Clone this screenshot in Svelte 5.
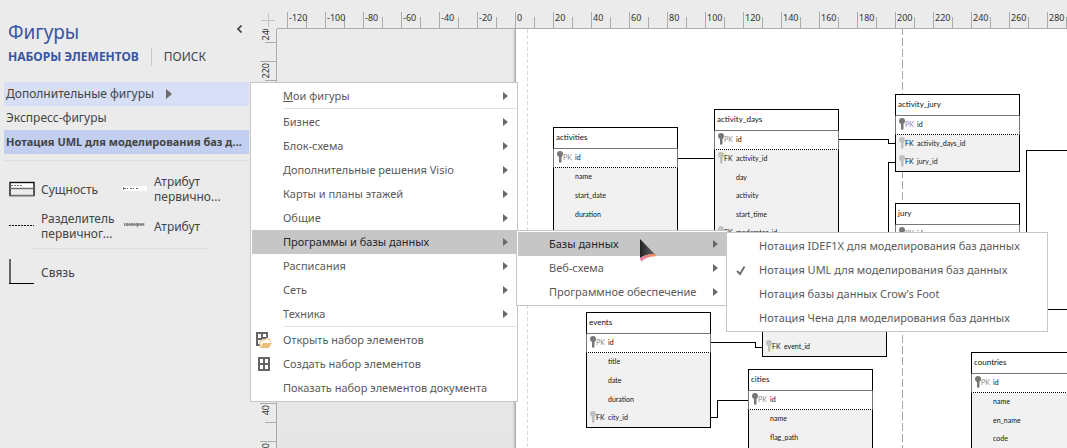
<script>
  const horizontalMarks = [-120, -100, -80, -60, -40, -20, 0, 20, 40, 60, 80, 100, 120, 140, 160, 180, 200, 220, 240, 260, 280];
  const verticalMarks = [240, 220, 200, 180, 160, 140, 120, 100, 80, 60, 40, 20];

  const categories = ['Бизнес', 'Блок-схема', 'Дополнительные решения Visio', 'Карты и планы этажей', 'Общие', 'Программы и базы данных', 'Расписания', 'Сеть', 'Техника'];
  const software = ['Базы данных', 'Веб-схема', 'Программное обеспечение'];
  const notations = [
    'Нотация IDEF1X для моделирования баз данных',
    'Нотация UML для моделирования баз данных',
    'Нотация базы данных Crow’s Foot',
    'Нотация Чена для моделирования баз данных'
  ];
  const openCategory = 'Программы и базы данных';
  const openSoftware = 'Базы данных';
  const checkedNotation = notations[1];

  const pk = { key: 'PK', name: 'id' };
  const field = (name) => ({ key: '', name });
  const fk = (name) => ({ key: 'FK', name });

  const entities = [
    { title: 'activities', x: 37, y: 98, h: 116, rows: [pk, field('name'), field('start_date'), field('duration'), field('')] },
    { title: 'activity_days', x: 198, y: 80, h: 134, rows: [pk, fk('activity_id'), field('day'), field('activity'), field('start_time'), fk('moderator_id')] },
    { title: 'activity_jury', x: 379, y: 65, h: 78, rows: [pk, fk('activity_days_id'), fk('jury_id')] },
    { title: 'jury', x: 379, y: 174, h: 41, rows: [pk] },
    { title: '', x: 246, y: 268, h: 60, rows: [field(''), fk('event_id')] },
    { title: 'events', x: 70, y: 283, h: 116, rows: [pk, field('title'), field('date'), field('duration'), fk('city_id')] },
    { title: 'cities', x: 232, y: 340, h: 97, rows: [pk, field('name'), field('flag_path'), field('')] },
    { title: 'countries', x: 455, y: 323, h: 97, rows: [pk, field('name'), field('en_name'), field('code')] }
  ];

  const connectors = [
    'M161 129.5H199',
    'M322 110.5H372.5V114.5H379',
    'M379 133.5H372.5V260',
    'M1200 121.5H510.5V280.5H1200',
    'M195 313.5H239.5V318.5H246',
    'M195 388.5H201.5V371.5H232'
  ];
</script>

{#snippet arrow()}
  <svg class="arrow" width="5" height="8" viewBox="0 0 5 8" aria-hidden="true"><path d="M0 0L5 4L0 8Z" /></svg>
{/snippet}

<div class="app">
  <aside class="shapes">
    <header>
      <h1>Фигуры</h1>
      <button class="collapse" aria-label="Свернуть">
        <svg width="5" height="8" viewBox="0 0 5 8"><path d="M4.5 .5L1 4L4.5 7.5" fill="none" stroke="#444" stroke-width="1.7" /></svg>
      </button>
    </header>
    <nav class="tabs">
      <button class="tab current">НАБОРЫ ЭЛЕМЕНТОВ</button>
      <button class="tab">ПОИСК</button>
    </nav>
    <div class="stencils">
      <button class="stencil more">Дополнительные фигуры
        <svg width="6" height="10" viewBox="0 0 6 10" aria-hidden="true"><path d="M0 0L6 5L0 10Z" fill="#6a6a6a" /></svg>
      </button>
      <button class="stencil">Экспресс-фигуры</button>
      <button class="stencil selected">Нотация UML для моделирования баз д...</button>
    </div>
    <div class="masters">
      <button class="master">
        <svg width="26" height="26" viewBox="0 0 26 26" aria-hidden="true">
          <rect x="1" y="6.5" width="24" height="13" fill="#fff" stroke="#111" stroke-width="1.4" />
          <rect x="2" y="12" width="22" height="7" fill="#ececec" />
          <path d="M1 12.5H25M1 19.5H25" stroke="#707070" stroke-width="1.6" />
          <path d="M2 9.5H14" stroke="#777" stroke-dasharray="2 1" />
        </svg>
        <span>Сущность</span>
      </button>
      <button class="master">
        <svg width="26" height="26" viewBox="0 0 26 26" aria-hidden="true">
          <rect x="0" y="10" width="25" height="5" fill="#fff" />
          <path d="M1.5 11V14" stroke="#777" />
          <path d="M2 12.5H17" stroke="#666" stroke-dasharray="2 1 1 2" />
        </svg>
        <span>Атрибут<br />первично...</span>
      </button>
      <button class="master">
        <svg width="26" height="26" viewBox="0 0 26 26" aria-hidden="true"><path d="M0 12.5H25" stroke="#111" stroke-dasharray="2 1" /></svg>
        <span>Разделитель<br />первичног...</span>
      </button>
      <button class="master">
        <svg width="26" height="26" viewBox="0 0 26 26" aria-hidden="true">
          <path d="M2 11.500H23" stroke="#888" stroke-width="3" stroke-dasharray="1.500 .7 2 .5" />
          <path d="M4 11.500H22M15.500 10V14.500" stroke="#888" />
        </svg>
        <span>Атрибут</span>
      </button>
    </div>
    <div class="masters links">
      <button class="master">
        <svg width="26" height="26" viewBox="0 0 26 26" aria-hidden="true"><path d="M1 0V25" stroke="#666" stroke-width="2" /><path d="M0 24.5H25" stroke="#000" /></svg>
        <span>Связь</span>
      </button>
    </div>
  </aside>

  <main class="workspace">
    <div class="corner">
      <svg width="14" height="14" viewBox="0 0 14 14" aria-hidden="true"><path d="M0 7.500H14M7.500 0V14" stroke="#c6c6c6" /></svg>
    </div>
    <div class="ruler across">
      {#each horizontalMarks as mark}<span class="mark">{mark}</span>{/each}
    </div>
    <div class="ruler down">
      {#each verticalMarks as mark}<span class="mark"><span>{mark}</span></span>{/each}
    </div>
    <div class="canvas">
      <div class="page">
        <svg class="lines" aria-hidden="true">
          <path d="M11.500 0V1000" stroke="#d9d9d9" stroke-dasharray="4 2" />
          <path d="M386.500 -2V1000" stroke="#a6a6a6" stroke-dasharray="8 3" />
          {#each connectors as d}<path {d} stroke="#000" />{/each}
        </svg>
        {#each entities as entity}
          <section class="entity" style="left:{entity.x}px;top:{entity.y}px;height:{entity.h}px">
            <h2>{entity.title}</h2>
            <ul>
              {#each entity.rows as row}
                <li class:primary={row.key === 'PK'}>
                  <span class="key">
                    {#if row.key}
                      <svg width="6" height="12" viewBox="0 0 6 12" aria-hidden="true"><path d="M3 0C5 0 6 1.300 6 3C6 4.500 5 5.500 4.500 6V11L3 12L2 11V6C1 5.500 0 4.500 0 3C0 1.300 1 0 3 0Z" /></svg>{row.key}
                    {/if}
                  </span>
                  {row.name}
                </li>
              {/each}
            </ul>
          </section>
        {/each}
      </div>
    </div>
  </main>

  <ul class="menu root">
    <li><button><span><u>М</u>ои фигуры</span>{@render arrow()}</button></li>
    <li class="divider"></li>
    {#each categories as category}
      <li>
        <button class:open={category === openCategory}>{category}{@render arrow()}</button>
        {#if category === openCategory}
          <ul class="menu second">
            {#each software as entry}
              <li>
                <button class:open={entry === openSoftware}>{entry}{@render arrow()}</button>
                {#if entry === openSoftware}
                  <ul class="menu third">
                    {#each notations as notation}
                      <li>
                        <button>
                          {#if notation === checkedNotation}
                            <svg class="icon" width="16" height="16" viewBox="0 0 16 16" aria-hidden="true"><path d="M5 9L8 12L12.500 4.500" fill="none" stroke="#6a6a6a" stroke-width="1.800" /></svg>
                          {/if}
                          {notation}
                        </button>
                      </li>
                    {/each}
                  </ul>
                {/if}
              </li>
            {/each}
          </ul>
        {/if}
      </li>
    {/each}
    <li class="divider"></li>
    <li>
      <button>
        <svg class="icon" width="16" height="16" viewBox="0 0 16 16" aria-hidden="true">
          <path d="M0 0H12V6H10V2H7V5H10V7H6V8H2V12H4V14H0ZM2 2V6H5V2Z" fill="#666" fill-rule="evenodd" />
          <path d="M4 15V9H6L7 8H9V7H14V10" fill="#fff" stroke="#e8bd7c" />
          <path d="M4 16L7 11H16L13 16Z" fill="#ecc07c" />
        </svg>
        Открыть набор элементов
      </button>
    </li>
    <li>
      <button>
        <svg class="icon" width="16" height="16" viewBox="0 0 16 16" aria-hidden="true">
          <path d="M2 1H14V15H2ZM4 3V7H7V3ZM9 3V7H12V3ZM4 9V13H7V9ZM9 9V13H12V9Z" fill="#666" fill-rule="evenodd" />
        </svg>
        Создать набор элементов
      </button>
    </li>
    <li><button>Показать набор элементов документа</button></li>
  </ul>

  <svg class="cursor" width="20" height="26" viewBox="0 0 20 26" aria-hidden="true">
    <defs>
      <linearGradient id="body" x1="0" x2="1"><stop offset="0" stop-color="#222" /><stop offset="1" stop-color="#666" /></linearGradient>
      <linearGradient id="edge" x1="0" x2="1"><stop offset="0" stop-color="#ef6f9d" /><stop offset="1" stop-color="#ef9050" /></linearGradient>
    </defs>
    <path d="M3 2L19 18Q9 18 3 25Z" fill="#555" opacity=".2" />
    <path d="M2 1L16.500 16Q8 15.500 2 20Z" fill="url(#body)" />
    <path d="M2.500 22Q8 17 17.500 17" fill="none" stroke="url(#edge)" stroke-width="2.600" />
  </svg>
</div>

<style>
  :global(body) {
    margin: 0;
  }
  .app {
    position: relative;
    display: flex;
    height: 100vh;
    overflow: hidden;
    background: #ebebeb;
    color: #444;
    font: 12px/16px 'Noto Sans', 'Open Sans', sans-serif;
  }
  button {
    margin: 0;
    padding: 0;
    border: 0;
    background: none;
    color: inherit;
    font: inherit;
    text-align: left;
    white-space: nowrap;
  }
  ul {
    margin: 0;
    padding: 0;
    list-style: none;
  }

  .shapes {
    flex: none;
    box-sizing: border-box;
    width: 250px;
    padding: 18px 1px 0 4px;
  }
  header {
    display: flex;
    justify-content: space-between;
    padding: 0 7px 0 4px;
  }
  h1 {
    margin: 0;
    color: #3955a3;
    font-size: 19px;
    font-weight: 400;
    line-height: 28px;
  }
  .collapse {
    height: 22px;
  }
  .tabs {
    display: flex;
    gap: 12px;
    padding: 2px 4px 16px;
    line-height: 18px;
  }
  .tab + .tab {
    padding-left: 12px;
    border-left: 1px solid #c6c6c6;
  }
  .current {
    color: #3955a3;
    font-weight: 700;
  }
  .stencils {
    display: flex;
    flex-direction: column;
    padding-bottom: 6px;
    border-bottom: 1px solid #dfdfdf;
  }
  .stencil {
    display: flex;
    align-items: center;
    gap: 12px;
    height: 24px;
    padding-left: 2px;
    overflow: hidden;
  }
  .more {
    background: #d6dff5;
  }
  .selected {
    background: #c2cff1;
    font-size: 11px;
    font-weight: 700;
  }
  .masters {
    display: grid;
    grid-template-columns: 113px 1fr;
    row-gap: 7px;
    padding: 13px 5px 7px;
  }
  .master {
    display: flex;
    align-items: center;
    gap: 6px;
    height: 30px;
    line-height: 15px;
  }
  .master svg {
    flex: none;
  }
  .links {
    margin: 0 40px 0 26px;
    padding: 8px 0;
    border-top: 1px solid #dfdfdf;
  }
  .links .master {
    margin-left: -21px;
  }

  .workspace {
    flex: 1;
    display: grid;
    grid-template: 29px 1fr / 27px 1fr;
    min-width: 0;
    min-height: 0;
  }
  .corner {
    display: flex;
    align-items: flex-end;
    justify-content: flex-end;
    padding: 0 2px 2px 0;
  }
  .ruler {
    display: flex;
    overflow: hidden;
    color: #333;
    font-size: 9px;
    line-height: 12px;
  }
  .mark {
    flex: none;
    box-sizing: border-box;
  }
  .across {
    padding: 12px 0 0 10px;
    border-bottom: 1px solid #ababab;
  }
  .across .mark {
    width: 38px;
    padding-left: 1px;
    border-left: 1px solid #ababab;
    background: linear-gradient(#ababab, #ababab) 18px 5px / 1px 100% no-repeat;
  }
  .down {
    flex-direction: column;
    padding-left: 10px;
    border-right: 1px solid #ababab;
  }
  .down .mark {
    display: flex;
    height: 38px;
    padding-top: 1px;
    border-top: 1px solid #ababab;
    background: linear-gradient(#ababab, #ababab) 5px 18px / 100% 1px no-repeat;
  }
  .down .mark:first-child {
    margin-top: -6px;
  }
  .down .mark span {
    align-self: flex-start;
    writing-mode: vertical-rl;
    transform: rotate(180deg);
  }

  .canvas {
    display: flex;
    overflow: hidden;
    padding-left: 236px;
    background: linear-gradient(#ebebeb, #e6e6e6);
  }
  .page {
    position: relative;
    flex: 1;
    border-left: 1px solid #a9acb3;
    background: #fff;
    box-shadow: -1px 0 2px #bbb;
    margin-left: 2px;
  }
  .lines {
    position: absolute;
    inset: 0;
    width: 100%;
    height: 100%;
    fill: none;
    shape-rendering: crispEdges;
  }
  .entity {
    position: absolute;
    display: flex;
    flex-direction: column;
    box-sizing: border-box;
    width: 125px;
    background: #f1f1f1;
    color: #111;
    font: 7px/10px Lato, 'Open Sans', sans-serif;
  }
  h2 {
    flex: none;
    box-sizing: border-box;
    height: 22px;
    margin: 0;
    padding: 3px 2px;
    border: 1px solid #000;
    border-bottom-color: #777;
    background: #fff;
    font: 8px/12px Lato, 'Open Sans', sans-serif;
  }
  .entity ul {
    flex: 1;
    display: grid;
    grid-auto-rows: 1fr;
  }
  .entity li {
    display: flex;
    align-items: center;
    padding-bottom: 2px;
    border: solid #000;
    border-width: 0 1px;
  }
  .entity li:last-child {
    border-bottom-width: 1px;
  }
  .entity .primary {
    border-color: #777;
    border-bottom: 1px dotted #000;
    background: #fff;
  }
  .key {
    display: flex;
    align-items: center;
    box-sizing: border-box;
    width: 21px;
    padding-left: 3px;
  }
  .key svg {
    fill: #c0c0c0;
  }
  .primary .key {
    color: #888;
  }
  .primary .key svg {
    fill: #777;
  }

  .menu {
    position: absolute;
    z-index: 1;
    box-sizing: border-box;
    padding: 1px;
    border: 1px solid #c6c6c6;
    background: #fff;
    color: #5a5a5a;
    font-size: 11px;
  }
  .root {
    top: 82px;
    left: 250px;
    width: 268px;
  }
  .second {
    top: 0;
    left: 100%;
    width: 212px;
  }
  .third {
    top: 0;
    left: 100%;
    width: 322px;
  }
  .menu li {
    position: relative;
  }
  .menu button {
    position: relative;
    display: flex;
    align-items: center;
    justify-content: space-between;
    box-sizing: border-box;
    width: 100%;
    height: 24px;
    padding: 0 8px 0 31px;
  }
  .menu .open {
    background: #c6c6c6;
    color: #262626;
  }
  .menu .divider {
    height: 1px;
    margin: 0 0 1px 32px;
    background: #e1e1e1;
  }
  .arrow {
    fill: #6a6a6a;
  }
  .icon {
    position: absolute;
    top: 4px;
    left: 4px;
  }
  .cursor {
    position: absolute;
    z-index: 2;
    top: 238px;
    left: 638px;
  }
</style>
